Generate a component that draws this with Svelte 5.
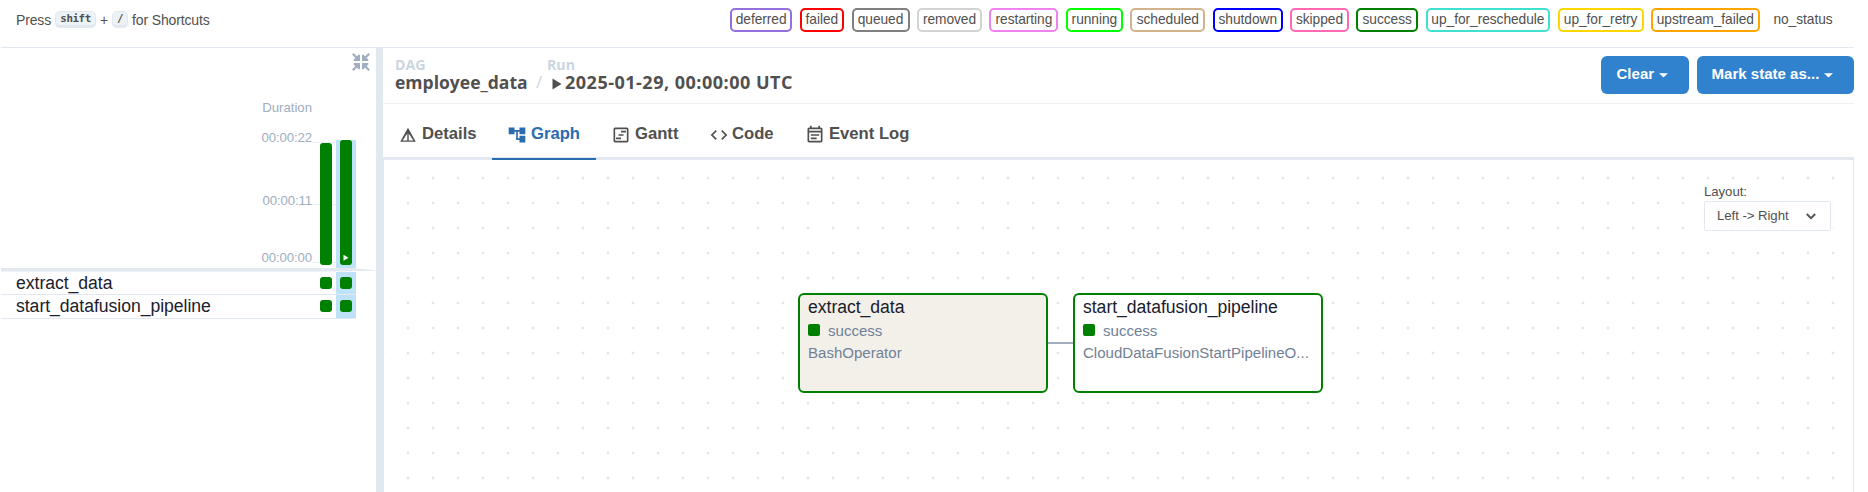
<script>
  const states = [
    ['deferred', 'mediumpurple', 62],
    ['failed', 'red', 44.5],
    ['queued', 'gray', 58],
    ['removed', 'lightgrey', 65],
    ['restarting', 'violet', 69],
    ['running', 'lime', 57],
    ['scheduled', 'tan', 75],
    ['shutdown', 'blue', 70],
    ['skipped', 'hotpink', 58.5],
    ['success', 'green', 62],
    ['up_for_reschedule', 'turquoise', 124.5],
    ['up_for_retry', 'gold', 86],
    ['upstream_failed', 'orange', 108.5],
    ['no_status', 'transparent', 72]
  ];
  const tasks = ['extract_data', 'start_datafusion_pipeline'];
  const ticks = ['00:00:22', '00:00:11', '00:00:00'];
  const nodes = [
    { name: 'extract_data', operator: 'BashOperator', x: 414, selected: true },
    { name: 'start_datafusion_pipeline', operator: 'CloudDataFusionStartPipelineO...', x: 689, selected: false }
  ];
</script>

<div class="page">
  <header class="topbar">
    <div class="shortcuts"><span>Press</span><kbd>shift</kbd><span class="plus">+</span><kbd class="slash">/</kbd><span>for Shortcuts</span></div>
    <div class="legend">
      {#each states as [name, color, width]}
        <span class="state" style="border-color:{color};width:{width}px">{name}</span>
      {/each}
    </div>
  </header>

  <div class="body">
    <aside class="grid">
      <div class="tools">
        <svg width="18" height="18" viewBox="0 0 18 18" stroke="#a0aec0" stroke-width="2.2" fill="#a0aec0">
          <path d="M.8.8 5 5M17.2.8 13 5M.8 17.2 5 13M17.2 17.2 13 13" />
          <path stroke="none" d="M8 1.7V8H1.7V6.6L6.6 1.7ZM10 1.7V8h6.3V6.6L11.4 1.7ZM8 16.3V10H1.7v1.4l4.9 4.9ZM10 16.3V10h6.3v1.4l-4.9 4.9Z" />
        </svg>
      </div>
      <div class="chart">
        <div class="axis">
          <span class="duration">Duration</span>
          {#each ticks as tick, i}<span class="tick t{i}">{tick}</span>{/each}
        </div>
        <div class="bars">
          <i class="rule r0"></i><i class="rule r1"></i><i class="rule r2"></i>
          <div class="run"><div class="bar first"></div></div>
          <div class="run chosen"><div class="bar">
            <svg width="6" height="8" viewBox="0 0 6 8"><path d="M.5.8 5.5 3.8.5 6.8Z" fill="#fff" /></svg>
          </div></div>
        </div>
      </div>
      <svg class="edge" width="375" height="4" viewBox="0 0 375 4"><path d="M0 0H352L375 2.6V3H352L350 3.5H0Z" fill="#e2e8f0" /></svg>
      {#each tasks as task}
        <div class="task">
          <span class="label">{task}</span>
          <span class="cell"><i></i></span>
          <span class="cell chosen"><i></i></span>
        </div>
      {/each}
    </aside>
    <div class="divider"></div>

    <main>
      <div class="heading">
        <div class="crumb first-crumb">
          <small>DAG</small>
          <b>employee_data</b>
        </div>
        <span class="sep">/</span>
        <div class="crumb">
          <small>Run</small>
          <b class="run-id"><svg width="10" height="12" viewBox="0 0 10 12"><path d="M.5.5 9.5 6 .5 11.5Z" fill="#51504f" /></svg><span>2025-01-29, 00:00:00 UTC</span></b>
        </div>
        <div class="actions">
          <button class="clear">Clear<svg width="9" height="5" viewBox="0 0 9 5"><path d="M0 .3H9L4.5 4.6Z" fill="#fff" /></svg></button>
          <button class="mark">Mark state as...<svg width="9" height="5" viewBox="0 0 9 5"><path d="M0 .3H9L4.5 4.6Z" fill="#fff" /></svg></button>
        </div>
      </div>

      <nav>
        <div class="tab details">
          <svg width="20" height="20" viewBox="0 0 24 24" fill="currentColor"><path d="M12 1 1 21h22L12 1Zm1 7.9L19.6 19H13V8.9ZM11 19H4.4L11 8.9V19Z" transform="translate(1.8 2.6) scale(.85 .84)" /></svg>
          <span>Details</span>
        </div>
        <div class="tab graph">
          <svg width="20" height="20" viewBox="0 0 24 24" fill="currentColor"><path d="M22 11V3h-7v3H9V3H2v8h7V8h2v10h4v3h7v-8h-7v3h-2V8h2v3Z" /></svg>
          <span>Graph</span>
        </div>
        <div class="tab gantt">
          <svg width="20" height="20" viewBox="0 0 24 24" fill="currentColor"><path d="M19 5v14H5V5h14m0-2H5c-1.1 0-2 .9-2 2v14c0 1.1.9 2 2 2h14c1.1 0 2-.9 2-2V5c0-1.1-.9-2-2-2ZM12 17H6v-2h6Zm3-4H9v-2h6Zm3-4h-6V7h6Z" /></svg>
          <span>Gantt</span>
        </div>
        <div class="tab code">
          <svg width="20" height="20" viewBox="0 0 24 24" fill="currentColor"><path d="M9.4 16.6 4.8 12l4.6-4.6L8 6l-6 6 6 6 1.4-1.4Zm5.2 0 4.6-4.6-4.6-4.6L16 6l6 6-6 6-1.4-1.4Z" /></svg>
          <span>Code</span>
        </div>
        <div class="tab events">
          <svg width="20" height="20" viewBox="0 0 24 24" fill="currentColor"><path d="M19 3h-1V1h-2v2H8V1H6v2H5c-1.1 0-2 .9-2 2v14c0 1.1.9 2 2 2h14c1.1 0 2-.9 2-2V5c0-1.1-.9-2-2-2Zm0 16H5V9h14v10Zm0-12H5V5h14v2ZM7 11h10v2H7Zm0 4h7v2H7Z" /></svg>
          <span>Event Log</span>
        </div>
      </nav>

      <section class="canvas">
        <div class="layout">
          <span>Layout:</span>
          <div class="select">Left -&gt; Right<svg width="10" height="7" viewBox="0 0 10 7" fill="none" stroke="#51504f" stroke-width="1.8"><path d="M.8 1 5 5.2 9.2 1" /></svg></div>
        </div>
        <i class="link"></i>
        {#each nodes as node}
          <article class:selected={node.selected} style="left:{node.x}px">
            <div class="name">{node.name}</div>
            <div class="status"><i></i>success</div>
            <div class="operator">{node.operator}</div>
          </article>
        {/each}
      </section>
    </main>
  </div>
</div>

<style>
  :global(body) { margin: 0; background: #fff; overflow: hidden; }
  * { box-sizing: border-box; }
  .page { height: 492px; width: 1868px; padding-right: 14px; padding-left: 1px; overflow: hidden; display: flex; flex-direction: column; font-family: "Liberation Sans", Arial, sans-serif; color: #51504f; }
  .topbar { height: 48px; flex: none; border-bottom: 1px solid #e2e8f0; display: flex; justify-content: space-between; padding: 8px 15px 0 15px; }
  .shortcuts { display: flex; align-items: center; height: 23px; font-size: 14px; white-space: nowrap; letter-spacing: -.15px; }
  kbd { font: bold 10.8px "DejaVu Sans Mono", monospace; letter-spacing: -.4px; height: 17px; width: 41px; margin-left: 4px; text-align: center; line-height: 13px; background: #edf2f7; border: 1px solid #e2e8f0; border-bottom-width: 3px; border-radius: 5px; }
  .plus { margin: 0 0 0 4px; }
  .slash { width: 16px; margin: 0 4px 0 4px; }
  .legend { display: flex; gap: 7.46px; }
  .state { height: 24px; flex: none; border: 2px solid; border-radius: 5px; font-size: 13.75px; line-height: 19px; text-align: center; white-space: nowrap; letter-spacing: -.05px; }
  .body { flex: 1; display: flex; min-height: 0; }
  .grid { width: 375px; flex: none; display: flex; flex-direction: column; }
  .tools { height: 51px; display: flex; justify-content: flex-end; padding: 5px 6px 0 0; }
  .chart { height: 169px; display: flex; font-size: 13.2px; color: #a0aec0; }
  .axis { width: 311px; display: flex; flex-direction: column; align-items: flex-end; line-height: 16px; letter-spacing: -.1px; }
  .duration { margin-top: 1px; letter-spacing: 0; }
  .t0 { margin-top: 14px; }
  .t1 { margin-top: 47px; }
  .t2 { margin-top: 41px; }
  .bars { display: grid; grid-template-columns: 4px 20px 20px; grid-template-rows: 41px 128px; }
  .run { grid-row: 2; grid-column: 2; padding-left: 4px; }
  .run.chosen { grid-column: 3; background: #bee3f8; }
  .bar { width: 12px; height: 125px; background: green; border-radius: 3px; display: flex; align-items: flex-end; justify-content: center; padding-bottom: 3px; }
  .first { height: 122px; margin-top: 3px; }
  .rule { grid-row: 2; grid-column: 1 / 4; height: 1px; background: #e2e8f0b0; }
  .r0 { margin-top: 2px; }
  .r1 { margin-top: 64px; }
  .r2 { margin-top: 122px; }
  .edge { display: block; flex: none; }
  .task { width: 355px; height: 23px; display: flex; align-items: center; border-bottom: 1px solid #e2e8f0; flex: none; }
  .task + .task { height: 24px; }
  .label { flex: 1; padding-left: 15px; font-size: 17.6px; line-height: 20px; color: #1a202c; letter-spacing: -.03px; }
  .task + .task .label { margin-top: -1px; }
  .cell { width: 20px; align-self: stretch; display: flex; align-items: center; justify-content: center; }
  .task + .task .cell { padding-bottom: 1px; }
  .cell.chosen { background: #bee3f8; }
  .cell i { width: 12px; height: 12px; border-radius: 3px; background: green; }
  .divider { width: 7px; background: #e2e8f0; }
  main { flex: 1; min-width: 0; display: flex; flex-direction: column; }
  .heading { height: 56px; flex: none; border-bottom: 1px solid #edf2f7; display: flex; padding: 8px 0 0 12px; font-family: "Open Sans", "Noto Sans", sans-serif; }
  .crumb { display: flex; flex-direction: column; }
  .first-crumb { width: 132px; }
  .crumb small { font-size: 14.2px; line-height: 17px; height: 16px; font-weight: 700; color: #cbd5e0; }
  .crumb b { font-size: 17.55px; line-height: 20px; font-weight: 700; white-space: nowrap; }
  .sep { color: #cbd5e0; font-size: 17px; line-height: 20px; padding: 16px 0 0 9px; width: 20px; }
  .crumb .run-id { display: flex; align-items: center; font-size: 18px; letter-spacing: .5px; }
  .run-id svg { margin: 3px 3px 0 5px; }
  .actions { margin-left: auto; display: flex; gap: 8px; }
  button { height: 38px; border: 0; border-radius: 6px; background: #3182ce; color: #fff; font: bold 15.05px "Liberation Sans", Arial, sans-serif; display: flex; align-items: center; gap: 5px; padding: 0 0 3px 15.5px; white-space: nowrap; }
  .clear { width: 88px; }
  .mark { width: 157px; padding-left: 14.5px; }
  .mark svg, .clear svg { margin-top: 3px; }
  nav { height: 56px; flex: none; box-shadow: inset 0 -3px #e2e8f0; display: flex; font-weight: bold; font-size: 16.65px; }
  .tab { display: flex; align-items: center; gap: 4px; padding: 5px 0 0 15px; height: 56px; flex: none; }
  .tab span { line-height: 20px; margin-bottom: 2px; white-space: nowrap; }
  .details { width: 109px; }
  .graph { width: 104px; color: #2b6cb0; box-shadow: inset 0 -2px #2b6cb0; }
  .gantt { width: 98px; }
  .code { width: 96px; gap: 3px; }
  .canvas { position: relative; flex: 1; border: solid #e2e8f0; border-width: 0 1px; background: radial-gradient(circle at 12.5px 12.5px, #d2d2d2 .9px, transparent 1.2px) 11.5px 5.5px / 25px 25px; }
  .layout { position: absolute; right: 15px; top: 24px; width: 139px; height: 51px; padding: 0 7px 0 5px; background: #ffffffcc; font-size: 13.2px; letter-spacing: -.05px; }
  .layout > span { display: block; height: 17px; line-height: 15px; font-size: 13.2px; }
  .select { height: 30px; border: 1px solid #e2e8f0; border-radius: 2px; display: flex; align-items: center; justify-content: space-between; padding: 0 14px 1px 12px; }
  .select svg { margin-top: 2px; }
  .link { position: absolute; left: 664px; top: 182px; width: 25px; height: 2px; background: #a0aec0; }
  article { position: absolute; top: 133px; width: 250px; height: 100px; border: 2px solid green; border-radius: 6px; background: #fff; padding: 2px 7px 2px 8px; color: #718096; font-size: 15.05px; }
  .selected { background: #f3f0ea; }
  .name { color: #1a202c; font-size: 17.6px; line-height: 20px; letter-spacing: -.03px; }
  .status { display: flex; align-items: center; height: 24px; gap: 8px; margin: 1px 0; }
  .status i { width: 12px; height: 12px; border-radius: 2px; background: green; }
  .operator { height: 20px; line-height: 20px; white-space: nowrap; }
</style>
